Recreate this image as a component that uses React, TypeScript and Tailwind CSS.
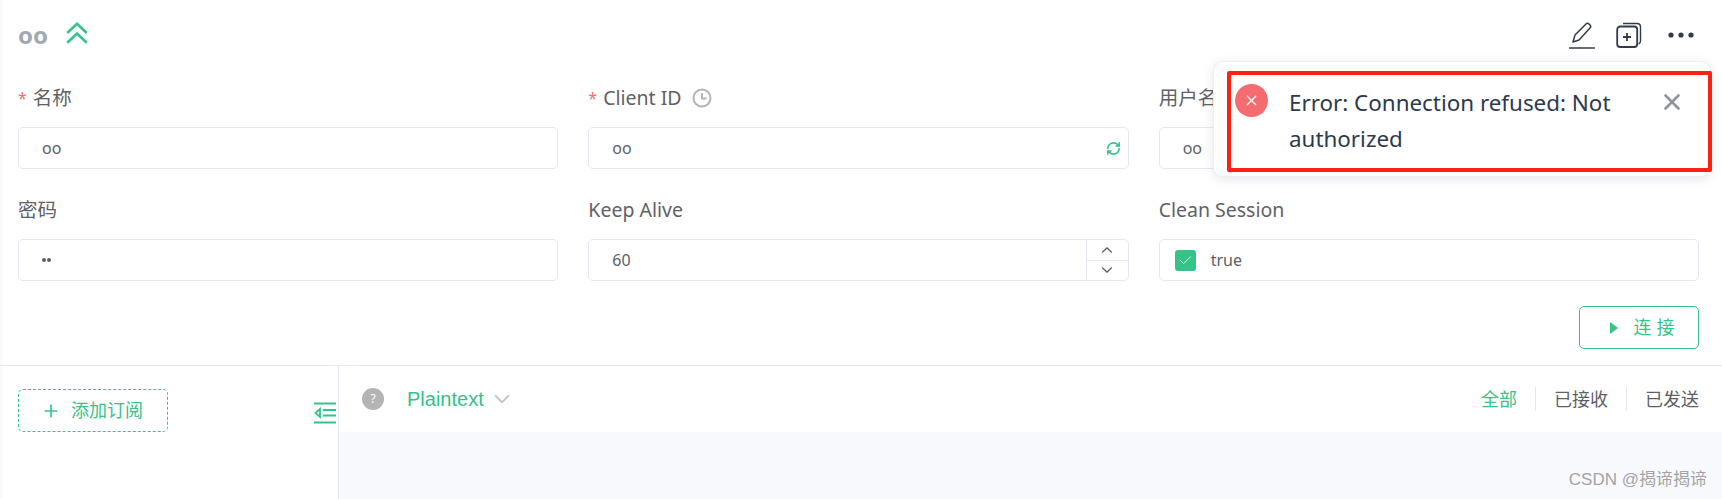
import React from "react";
import { ChevronUp, ChevronDown, Plus, X, Check, RefreshCw } from "lucide-react";

const F = "[font-family:'Noto_Sans','Noto_Sans_CJK_SC',sans-serif]";
const box = "h-[42px] w-full rounded-[5px] border border-[#e4e6f0] bg-white flex items-center text-[16px] text-[#5c5f66]";

function Field({ label, req, extra, children }: { label: string; req?: boolean; extra?: React.ReactNode; children: React.ReactNode }) {
  return (
    <div className="flex flex-col">
      <div className="h-[42px] flex items-center text-[19.500px] text-[#5f6166] mb-[8px]">
        {req && <span className="text-[#f56c6c] text-[16px] mr-[6px]">*</span>}
        <span>{label}</span>
        {extra}
      </div>
      {children}
    </div>
  );
}

export default function App() {
  return (
    <div className={`${F} relative w-[1722px] h-[499px] overflow-hidden bg-white`}>
      <div className="absolute left-0 top-0 w-[4px] h-full bg-gradient-to-r from-[#f7f8f9] to-white" />
      <div className="relative h-[365px] pl-[18px] pr-[23px] border-b border-[#e4e6f0] box-content">
        <div className="h-[78px] flex items-center justify-between pb-[8px]">
          <div className="flex items-center">
            <span className="text-[24px] font-bold text-[#a2a9b3] leading-none">oo</span>
            <svg className="ml-[16px] -mt-[5px]" width="26" height="26" viewBox="0 0 24 24" fill="none" stroke="#34c388" strokeWidth="2.400">
              <path d="M3 12 12 3.500 21 12" />
              <path d="M3 21 12 12.500 21 21" />
            </svg>
          </div>
          <div className="flex items-center mr-[4px]">
            <svg width="28" height="28" viewBox="0 0 28 28" fill="none" stroke="#323b4a" strokeWidth="1.500" strokeLinejoin="round">
              <path d="M5 21 7 14 18 3 c1-1 2-1 3 0 l1 1 c1 1 1 2 0 3 L11 19 5 21Z" />
              <path d="M1 27H27" />
            </svg>
            <svg className="ml-[20px]" width="26" height="26" viewBox="0 0 26 26" fill="none" stroke="#323b4a" strokeWidth="1.800">
              <path d="M7 1.500h14c2 0 3.500 1.500 3.500 3.500v14c0 1.500-.7 2.500-2 3" strokeWidth="1.400" />
              <rect x="1.200" y="4.500" width="20" height="20.500" rx="3" />
              <path d="M7 15h8M11 11v8" />
            </svg>
            <svg className="ml-[25px]" width="28" height="8" viewBox="0 0 28 8" fill="#323b4a">
              <circle cx="4" cy="4" r="2.600" />
              <circle cx="14" cy="4" r="2.600" />
              <circle cx="24" cy="4" r="2.600" />
            </svg>
          </div>
        </div>

        <div className="grid grid-cols-3 gap-x-[30px] gap-y-[20px] mt-[-1px]">
          <Field label="名称" req>
            <div className={`${box} pl-[23px]`}>oo</div>
          </Field>
          <Field
            label="Client ID"
            req
            extra={
              <svg className="ml-[10px]" width="20" height="20" viewBox="0 0 20 20" fill="none" stroke="#b4b4b4" strokeWidth="2">
                <circle cx="10" cy="10" r="8.500" />
                <path d="M10 5v5.500h4.500" />
              </svg>
            }
          >
            <div className={`${box} pl-[23px] justify-between pr-[7px]`}>
              <span>oo</span>
              <RefreshCw size={15} strokeWidth={2.600} color="#34c388" />
            </div>
          </Field>
          <Field label="用户名">
            <div className={`${box} pl-[23px]`}>oo</div>
          </Field>
          <Field label="密码">
            <div className={`${box} pl-[23px]`}>
              <span className="flex gap-[1px]">
                <span className="w-[4px] h-[4px] rounded-full bg-[#5c5f66]" />
                <span className="w-[4px] h-[4px] rounded-full bg-[#5c5f66]" />
              </span>
            </div>
          </Field>
          <Field label="Keep Alive">
            <div className={`${box} pl-[23px] justify-between`}>
              <span>60</span>
              <div className="w-[42px] h-full border-l border-[#e4e6f0] flex flex-col text-[#55585e]">
                <div className="flex-1 flex items-center justify-center border-b border-[#e4e6f0]"><ChevronUp size={18} strokeWidth={1.500} /></div>
                <div className="flex-1 flex items-center justify-center"><ChevronDown size={18} strokeWidth={1.500} /></div>
              </div>
            </div>
          </Field>
          <Field label="Clean Session">
            <div className={`${box} pl-[15px]`}>
              <span className="w-[21px] h-[21px] rounded-[3px] bg-[#34c388] flex items-center justify-center">
                <Check size={15} strokeWidth={1.300} color="white" />
              </span>
              <span className="ml-[15px]">true</span>
            </div>
          </Field>
        </div>

        <div className="flex justify-end mt-[25px]">
          <button className="w-[120px] h-[43px] rounded-[5px] border border-[#34c388] text-[#34c388] flex items-center justify-center pl-[10px] text-[18px] tracking-[5px]">
            <svg width="10" height="14" viewBox="0 0 10 14" fill="#34c388"><path d="M1 1l8 6-8 6z" /></svg>
            <span className="ml-[15px]">连接</span>
          </button>
        </div>
      </div>

      <div className="flex h-[133px]">
        <div className="w-[339px] border-r border-[#e4e6f0] pl-[18px] pt-[23px] relative shrink-0">
          <button className="w-[150px] h-[43px] rounded-[5px] border border-dashed border-[#34c388] text-[#34c388] flex items-center pl-[22px] text-[18px]">
            <Plus size={20} strokeWidth={2} />
            <span className="ml-[10px]">添加订阅</span>
          </button>
          <svg className="absolute left-[314px] top-[36px]" width="23" height="22" viewBox="0 0 23 22" fill="none" stroke="#34c388" strokeWidth="1.800">
            <path d="M0 1.500h22M9 8h13M9 13.500h13M0 20.500h22" />
            <path d="M6 7 1.500 11 6 15z" />
          </svg>
        </div>
        <div className="flex-1 flex flex-col">
          <div className="h-[66px] flex items-center pl-[23px] pr-[23px] text-[18px]">
            <span className="w-[22px] h-[22px] rounded-full bg-[#b4b4b4] text-white text-[12px] flex items-center justify-center">?</span>
            <span className="ml-[23px] text-[#34c388] text-[20px] [font-family:'Liberation_Sans',sans-serif]">Plaintext</span>
            <ChevronDown className="ml-[5px]" size={26} strokeWidth={1.800} color="#c2c8d4" />
            <div className="ml-auto flex items-center">
              <span className="text-[#34c388]">全部</span>
              <span className="w-px h-[24px] bg-[#e4e6f0] mx-[18px]" />
              <span className="text-[#5c5f66]">已接收</span>
              <span className="w-px h-[24px] bg-[#e4e6f0] mx-[18px]" />
              <span className="text-[#5c5f66]">已发送</span>
            </div>
          </div>
          <div className="flex-1 bg-[#f8f9fd] flex justify-end pr-[15px] pt-[36px]">
            <span className="text-[17px] leading-[24px] text-[#a3a3a3] [font-family:'Liberation_Sans','Noto_Sans_CJK_SC',sans-serif]">CSDN @揭谛揭谛</span>
          </div>
        </div>
      </div>

      <div className="absolute left-[1213px] top-[61px] w-[498px] h-[116px] rounded-[10px] bg-white border border-[#ebeef5] shadow-[0_2px_12px_rgba(0,0,0,0.1)]" />
      <div className="absolute left-[1227px] top-[71px] w-[485px] h-[101px] border-[4px] border-[#ff1f14] rounded-[2px] flex">
        <span className="mt-[9px] ml-[4px] w-[33px] h-[33px] shrink-0 rounded-full bg-[#f56c70] flex items-center justify-center">
          <X size={17} color="white" strokeWidth={1.800} />
        </span>
        <div className="ml-[21px] mt-[10px] w-[345px] text-[22.400px] leading-[36px] text-[#2c3a4e]">Error: Connection refused: Not authorized</div>
        <X className="absolute right-[23px] top-[14px]" size={26} color="#8d939d" strokeWidth={2.400} />
      </div>
    </div>
  );
}
